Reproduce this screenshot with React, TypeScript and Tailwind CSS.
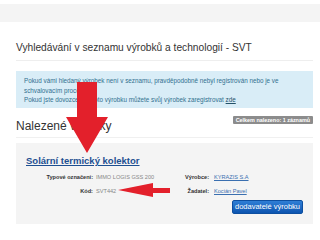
import React from "react";

export default function App() {
  return (
    <div className="relative w-[320px] h-[240px] overflow-hidden bg-white font-['Liberation_Sans',Arial,sans-serif]">
      <div className="mt-[4px] h-[18px] bg-[#f4f4f4]" />

      <div className="pl-[16px] pr-[7px]">
        {/* Title */}
        <h1 className="mt-[19px] pb-[6px] border-b border-[#eeeeee] text-[10.2px] leading-[13px] text-[#333333]">
          Vyhledávání v seznamu výrobků a technologií - SVT
        </h1>

        {/* Info */}
        <div className="mt-[10px] h-[37px] bg-[#d9edf7] px-[8px] pt-[5px] text-[6.3px] leading-[9.6px] text-[#31708f]">
          <p>Pokud vámi hledaný výrobek není v seznamu, pravděpodobně nebyl registrován nebo je ve schvalovacím procesu.</p>
          <p>
            Pokud jste dovozcem tohoto výrobku můžete svůj výrobek zaregistrovat <a className="underline text-[#245269]">zde</a>
          </p>
        </div>

        <div className="mt-[8px] flex justify-end">
          <span className="bg-[#8c8c8c] px-[3px] h-[8px] text-[5.4px] leading-[8px] font-bold text-white rounded-[1px]">
            Celkem nalezeno: 1 záznamů
          </span>
        </div>

        <h2 className="mt-[-5px] pb-[4px] border-b border-[#f0f0f0] text-[12px] leading-[14px] text-[#333333]">
          Nalezené výrobky
        </h2>

        {/* Card */}
        <div className="mt-[5px] h-[81px] bg-[#f4f4f4] px-[10px] pt-[12px]">
          <a className="block text-[9.5px] leading-[11px] font-bold underline text-[#1d4f91]">
            Solární termický kolektor
          </a>
          <div className="mt-[8px] flex text-[5.6px] leading-[7px]">
            <div className="w-[154px] grid grid-cols-[67px_1fr] gap-x-[3px] gap-y-[7px]">
              <span className="text-right font-bold text-[#333333]">Typové označení:</span>
              <span className="text-[#888888]">IMMO LOGIS GSS 200</span>
              <span className="text-right font-bold text-[#333333]">Kód:</span>
              <span className="text-[#888888]">SVT442</span>
            </div>
            <div className="grid grid-cols-[29px_1fr] gap-x-[5px] gap-y-[7px] h-fit">
              <span className="text-right font-bold text-[#333333]">Výrobce:</span>
              <a className="underline text-[#3a6fb0]">KYRAZIS S.A</a>
              <span className="text-right font-bold text-[#333333]">Žadatel:</span>
              <a className="underline text-[#3a6fb0]">Kocián Pavel</a>
            </div>
          </div>
          <div className="mt-[5px] flex justify-end pr-[0px]">
            <button className="w-[71px] h-[14px] rounded-[2px] border border-[#0d4fa0] bg-gradient-to-b from-[#2f7fd6] to-[#0c55b0] text-white text-[7.5px] leading-[12px]">
              dodavatelé výrobku
            </button>
          </div>
        </div>
      </div>

      {/* Red arrows */}
      <svg className="absolute left-0 top-0 pointer-events-none" width="320" height="240" viewBox="0 0 320 240">
        <polygon points="77,82 97,82 97,117 108,117 87,153 66,117 77,117" fill="#e3202b" />
        <polygon points="118,190 153,183 153,188 170,188 170,193 153,193 153,197" fill="#e3202b" />
      </svg>
    </div>
  );
}
